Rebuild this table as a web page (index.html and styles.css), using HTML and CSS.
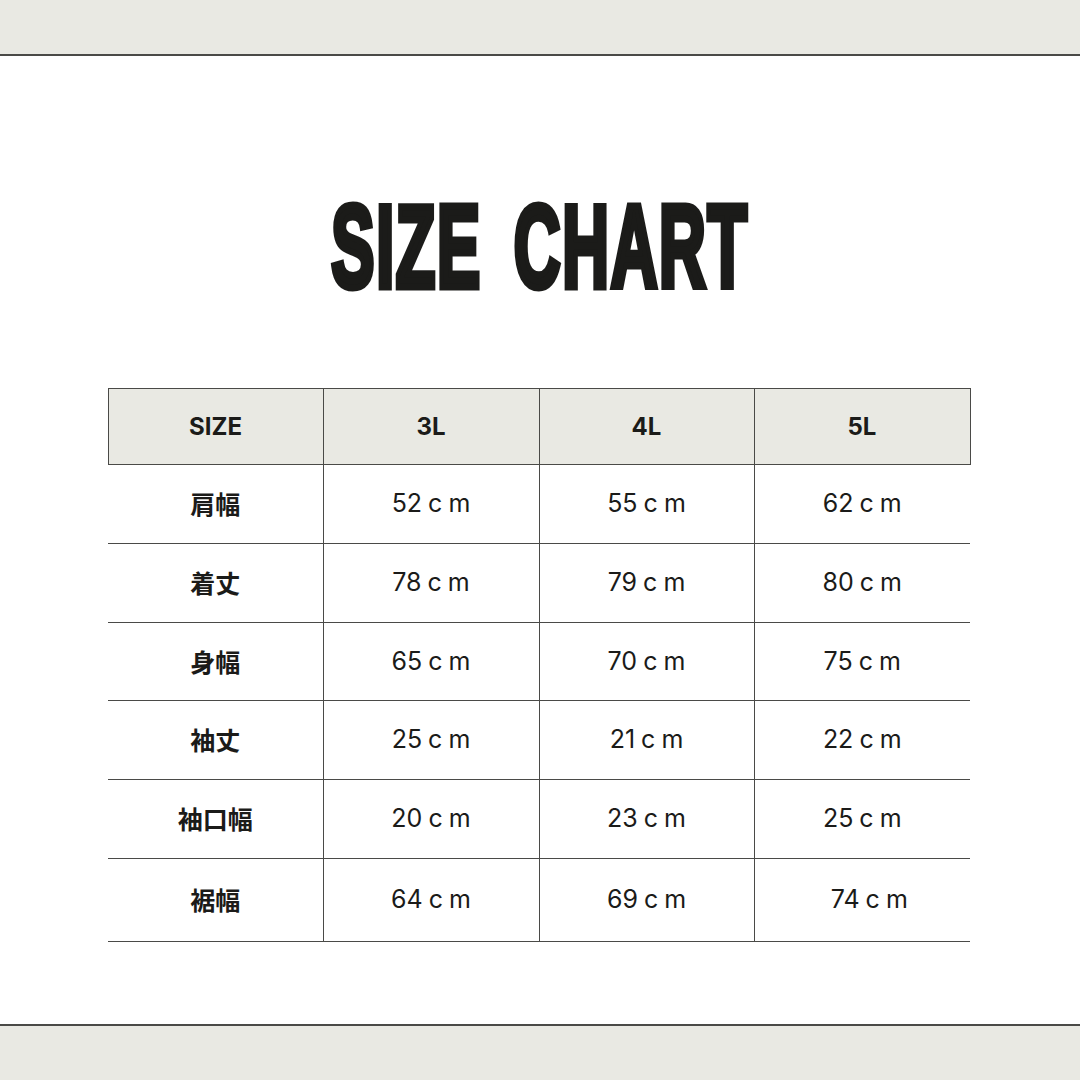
FILE: index.html
```html
<!DOCTYPE html>
<html lang="ja">
<head>
<meta charset="utf-8">
<title>Size Chart</title>
<link rel="stylesheet" href="styles.css">
</head>
<body>
<div class="page">
  <header class="band band-top"></header>
  <main class="content">
    <div class="title-wrap"><h1 class="title">SIZE CHART</h1></div>
    <table class="chart">
      <colgroup>
        <col class="c1"><col class="c2"><col class="c3"><col class="c4">
      </colgroup>
      <thead>
        <tr><th>SIZE</th><th>3L</th><th>4L</th><th>5L</th></tr>
      </thead>
      <tbody>
        <tr><td class="label">肩幅</td><td>52 c m</td><td>55 c m</td><td>62 c m</td></tr>
        <tr><td class="label">着丈</td><td>78 c m</td><td>79 c m</td><td>80 c m</td></tr>
        <tr class="short"><td class="label">身幅</td><td>65 c m</td><td>70 c m</td><td>75 c m</td></tr>
        <tr><td class="label">袖丈</td><td>25 c m</td><td>21 c m</td><td>22 c m</td></tr>
        <tr><td class="label">袖口幅</td><td>20 c m</td><td>23 c m</td><td>25 c m</td></tr>
        <tr class="last"><td class="label">裾幅</td><td>64 c m</td><td>69 c m</td><td class="shift">74 c m</td></tr>
      </tbody>
    </table>
  </main>
  <footer class="band band-bottom"></footer>
</div>
</body>
</html>
```
FILE: styles.css
```css
* { box-sizing: border-box; }
html, body { margin: 0; padding: 0; background: #ffffff; }
.page {
  width: 1080px;
  height: 1080px;
  display: flex;
  flex-direction: column;
  background: #ffffff;
}
.band { background: #e9e9e3; flex: none; }
.band-top { height: 56px; border-bottom: 2px solid #4a4a47; }
.band-bottom { height: 56px; border-top: 2px solid #4a4a47; }
.content {
  flex: 1;
  display: flex;
  flex-direction: column;
  align-items: center;
}
.title-wrap {
  height: 332px;
  display: flex;
  align-items: flex-start;
  justify-content: center;
  padding-top: 133px;
}
.title {
  margin: 0;
  font-family: "Liberation Sans Narrow", "Liberation Sans", sans-serif;
  font-weight: 700;
  font-size: 116px;
  line-height: 1;
  color: #1b1b19;
  letter-spacing: 3px;
  word-spacing: 22px;
  white-space: nowrap;
  -webkit-text-stroke: 7px #1b1b19;
  transform: scaleX(0.558);
}
.chart {
  width: 862px;
  margin-left: -2px;
  border-collapse: collapse;
  table-layout: fixed;
  font-family: Inter, "Liberation Sans", sans-serif;
  color: #1b1b19;
}
.c1 { width: 215px; }
.c2 { width: 216px; }
.c3 { width: 215px; }
.c4 { width: 216px; }
.chart th {
  height: 76px;
  background: #e9e9e3;
  border: 1px solid #4a4a47;
  font-family: Inter, "Liberation Sans", sans-serif;
  font-weight: 700;
  font-size: 24px;
  text-align: center;
  padding: 0;
}
.chart th + th { border-left-color: #8a8a86; }
.chart td {
  height: 79px;
  border-bottom: 1px solid #4a4a47;
  border-left: 1px solid #4a4a47;
  text-align: center;
  padding: 0 0 2px;
  font-size: 25px;
  font-weight: 400;
  word-spacing: -1px;
}
.chart td.label {
  border-left: none;
  font-family: "Noto Sans CJK JP", sans-serif;
  font-weight: 700;
  font-size: 25px;
  word-spacing: 0;
}
.chart tr.short td { height: 78px; }
.chart tr.last td { height: 83px; }
.chart td.shift { padding-left: 14px; }
```
